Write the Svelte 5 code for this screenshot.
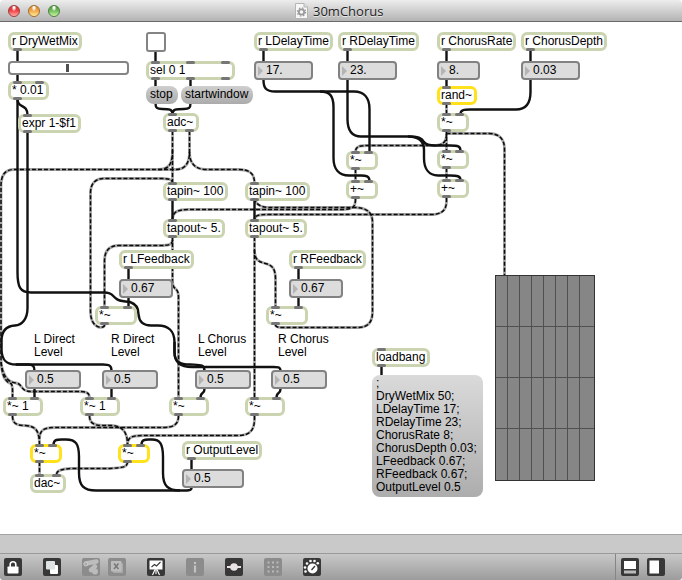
<script>
  // Objects of the patch: position, width, caption, inlet and outlet offsets
  const objects = [
    { x: 8, y: 32, w: 74, t: 'r DryWetMix', o: [5] },
    { x: 8, y: 81, w: 41, t: '* 0.01', i: [5, 27], o: [5] },
    { x: 18, y: 114, w: 63, t: 'expr 1-$f1', i: [5], o: [5] },
    { x: 146, y: 61, w: 89, t: 'sel 0 1', i: [5, 40, 75], o: [5, 40, 75] },
    { x: 163, y: 113, w: 36, t: 'adc~', i: [5], o: [5, 22] },
    { x: 254, y: 32, w: 79, t: 'r LDelayTime', o: [5] },
    { x: 338, y: 32, w: 81, t: 'r RDelayTime', o: [5] },
    { x: 437, y: 32, w: 79, t: 'r ChorusRate', o: [5] },
    { x: 521, y: 32, w: 86, t: 'r ChorusDepth', o: [5] },
    { x: 437, y: 86, w: 40, t: 'rand~', i: [5], o: [5], hot: true },
    { x: 437, y: 113, w: 32, t: '*~', i: [5, 18], o: [5] },
    { x: 346, y: 151, w: 32, t: '*~', i: [5, 18], o: [5] },
    { x: 346, y: 180, w: 32, t: '+~', i: [5, 18], o: [5] },
    { x: 437, y: 150, w: 32, t: '*~', i: [5, 18], o: [5] },
    { x: 437, y: 179, w: 32, t: '+~', i: [5, 18], o: [5] },
    { x: 163, y: 182, w: 65, t: 'tapin~ 100', i: [5], o: [5] },
    { x: 245, y: 182, w: 65, t: 'tapin~ 100', i: [5], o: [5] },
    { x: 163, y: 219, w: 62, t: 'tapout~ 5.', i: [5], o: [5] },
    { x: 245, y: 219, w: 62, t: 'tapout~ 5.', i: [5], o: [5] },
    { x: 119, y: 250, w: 75, t: 'r LFeedback', o: [5] },
    { x: 289, y: 250, w: 77, t: 'r RFeedback', o: [5] },
    { x: 95, y: 306, w: 42, t: '*~', i: [5, 28], o: [5] },
    { x: 266, y: 306, w: 42, t: '*~', i: [5, 28], o: [5] },
    { x: 3, y: 397, w: 40, t: '*~ 1', i: [5, 27], o: [5] },
    { x: 80, y: 397, w: 40, t: '*~ 1', i: [5, 27], o: [5] },
    { x: 169, y: 397, w: 40, t: '*~', i: [5, 27], o: [5] },
    { x: 245, y: 397, w: 40, t: '*~', i: [5, 27], o: [5] },
    { x: 30, y: 444, w: 32, t: '*~', i: [5, 18], o: [5], hot: true },
    { x: 118, y: 444, w: 32, t: '*~', i: [5, 18], o: [5], hot: true },
    { x: 30, y: 474, w: 36, t: 'dac~', i: [5, 22] },
    { x: 182, y: 441, w: 80, t: 'r OutputLevel', o: [5] },
    { x: 372, y: 348, w: 58, t: 'loadbang', i: [5], o: [5] }
  ];

  const numbers = [
    { x: 254, y: 61, w: 59, t: '17.' },
    { x: 338, y: 61, w: 59, t: '23.' },
    { x: 437, y: 61, w: 43, t: '8.' },
    { x: 521, y: 61, w: 59, t: '0.03' },
    { x: 119, y: 279, w: 54, t: '0.67' },
    { x: 289, y: 279, w: 54, t: '0.67' },
    { x: 25, y: 370, w: 56, t: '0.5' },
    { x: 102, y: 370, w: 56, t: '0.5' },
    { x: 195, y: 370, w: 56, t: '0.5' },
    { x: 271, y: 370, w: 56, t: '0.5' },
    { x: 182, y: 469, w: 62, t: '0.5' }
  ];

  const messages = [
    { x: 146, y: 86, w: 32, lines: ['stop'] },
    { x: 181, y: 86, w: 72, lines: ['startwindow'] },
    {
      x: 372, y: 375, w: 111, big: true,
      lines: [';', 'DryWetMix 50;', 'LDelayTime 17;', 'RDelayTime 23;', 'ChorusRate 8;',
        'ChorusDepth 0.03;', 'LFeedback 0.67;', 'RFeedback 0.67;', 'OutputLevel 0.5']
    }
  ];

  const comments = [
    { x: 34, y: 333, a: 'L Direct' },
    { x: 111, y: 333, a: 'R Direct' },
    { x: 198, y: 333, a: 'L Chorus' },
    { x: 278, y: 333, a: 'R Chorus' }
  ];

  // Control cords
  const solid = [
    'M17.5 50V62', 'M17.5 74V82', 'M17.5 99V272C17.5 287 20 292.5 31 292.5H104C113 292.5 112 296 116 298.5C120 302 125 301 130 302C136 304 138.500 309 138.500 314C139 322 144 325.500 151 325.500H158C168 325.500 174.500 331 174.500 342V352C174.500 362 180 364.500 190 364.500C200 365 204.500 364 204.500 371',
    'M174.500 342V352C174.500 364 182 367 192 367H268C277 367 280.500 366 280.500 371',
    'M17.500 99C17.500 109 27.500 103 27.500 115', 'M27.500 132V308C27.500 319 22 325 15 325.500C6 326 1.500 331 1.500 341V350C2 361 7 364.500 16 364.500H28C33 364.500 34.500 366 34.500 371', 'M16 364.500H103C110 364.500 111.500 366 111.500 371',
    'M155.500 52V62', 'M155.500 79V87', 'M190.500 79V87', 'M155.500 103C155.500 108 157 109 162 109C169 109 172.500 109 172.500 114', 'M190.500 103C190.500 108 189 109 184 109C176 109 172.500 109 172.500 114',
    'M263.500 50V62', 'M347.500 50V62', 'M446.500 50V62', 'M530.500 50V62', 'M446.500 80V87',
    'M263.500 80C263.500 88 266 91.500 275 91.500H354C364 91.500 369.500 98 369.500 109V152', 'M320 91.500C330 91.500 333.500 96 333.500 107V158C333.500 169 339 175.500 349 175.500H361C366 175.500 369.500 176 369.500 181',
    'M347.500 80V119C347.500 131 352 136.500 361 136.500H408C418 136.500 422 138 424 142C426 145 430 145.500 435 145.500H450C458 145.500 460.500 146 460.500 151', 'M408 136.500C420 136.500 424 142 424 150V158C424 169 429 175.500 438 175.500H450C457 175.500 460.500 176 460.500 180',
    'M530.500 80V92C530.500 104 525 109.500 516 109.500H473C465 109.500 460.500 109 460.500 114',
    'M172.500 200V220', 'M254.500 200V220', 'M128.500 268V280', 'M128.500 298V307', 'M298.500 268V280', 'M298.500 298V307',
    'M34.500 389V398', 'M111.500 389V398', 'M204.500 389C204.500 395 200.500 391 200.500 398', 'M280.500 389C280.500 395 276.500 391 276.500 398',
    'M191.500 459V470', 'M191.500 488C191.500 491 186 490.500 180 490.500H96C84 490.500 79 486 79 473V457C79 444 76 439.500 66 439.500H62C56 439.500 53.500 440 53.500 445', 'M180 490.500C168 490.500 163 486 163 473V457C163 444 160 439.500 152 439.500H149C144 439.500 141.500 440 141.500 445',
    'M381.500 366V376'
  ];

  // Signal cords
  const signal = [
    'M172.500 131V183', 'M172.500 150C172.500 163 170 169.500 158 169.500',
    'M189.500 131V152C189.500 163 185 169.500 176 169.500H14C5 169.500 1 175 1 186V357C1 376 6 382.500 11 383.500C13 386 12.500 390 12.500 398', 'M189.500 152C189.500 163 195 169.500 206 169.500H238C249 169.500 254.500 173 254.500 183',
    'M1 362C3 378 9 382.500 16 383C23 384 20 391.500 31 391.500H77C86 391.500 89.500 392 89.500 398',
    'M104.500 325C104.500 329 90.500 330 90.500 311V193C90.500 183 96 178.500 104 178.500H159C168 178.500 172.500 179 172.500 183',
    'M172.500 237V282C172.500 291 178.500 286 178.500 297V398', 'M172.500 240C172.500 245 168 245.500 160 245.500H119C109 245.500 104.500 251 104.500 261V307',
    'M355.500 199C355.500 207 353 209.500 341 209.500H189C177 209.500 172.500 212 172.500 220',
    'M446.500 198V201C446.500 211 441 214.500 431 214.500H270C259 214.500 254.500 215 254.500 220',
    'M275.500 325C275.500 327 279 327.500 283 327.500H358C368 327.500 372.500 322 372.500 312V222C372.500 211 365 207.500 354 207.500H269C260 207.500 254.500 203 254.500 198',
    'M254.500 237V398', 'M254.500 250C254.500 272 275.500 254 275.500 279V307',
    'M446.500 104V114', 'M446.500 131V151', 'M446.500 133.500H489C499 133.500 504.500 139 504.500 149V276', 'M446.500 134C446.500 143 442 145.500 433 145.500H369C360 145.500 355.500 146 355.500 152',
    'M355.500 169V181', 'M446.500 168V180',
    'M12.500 416C12.500 423 16 425.500 25 425.500C36 426 39.500 431 39.500 445', 'M89.500 416C89.500 423 94 425.500 102 425.500H111C122 426 127.500 431 127.500 445',
    'M178.500 416C178.500 425 173 427.500 163 427.500H55C44 427.500 39.500 430 39.500 439', 'M254.500 416V419C254.500 431 249 435.500 238 435.500H143C132 435.500 127.500 437 127.500 445',
    'M39.500 462V475', 'M127.500 462C127.500 468 121 467.500 110 468.500H72C62 469 56.500 470 56.500 475'
  ];
</script>

<div class="window">
  <header>
    <div class="lights"><i class="red"></i><i class="amber"></i><i class="green"></i></div>
    <div class="title">
      <svg width="13" height="16" viewBox="0 0 13 16">
        <path d="M.5.5H9L12.500 4V15.500H.5Z" fill="#f7f7f7" stroke="#b5b5b5" />
        <path d="M9 .5V4H12.500" fill="#ddd" stroke="#b5b5b5" />
        <circle cx="6.500" cy="9" r="2.700" fill="none" stroke="#9a9a9a" stroke-width="1.800" />
        <circle cx="6.500" cy="9" r="4.100" fill="none" stroke="#9a9a9a" stroke-width="1.200" stroke-dasharray="1.600 1.620" />
      </svg>
      <span>30mChorus</span>
    </div>
  </header>

  <main>
    <svg class="cords" width="682" height="512" viewBox="0 22 682 512">
      {#each signal as d}
        <path {d} class="sheath" />
      {/each}
      {#each signal as d}
        <path {d} class="dash" />
      {/each}
      {#each solid as d}
        <path {d} class="solid" />
      {/each}
    </svg>

    {#each comments as c}
      <div class="comment" style="left:{c.x}px;top:{c.y - 22}px">{c.a}<br />Level</div>
    {/each}

    {#each objects as b}
      <div class="object" class:hot={b.hot} style="left:{b.x}px;top:{b.y - 22}px;width:{b.w}px">
        {b.t}
        {#each b.i ?? [] as p}<i class="port in" style="left:{p}px"></i>{/each}
        {#each b.o ?? [] as p}<i class="port out" style="left:{p}px"></i>{/each}
      </div>
    {/each}

    {#each numbers as n}
      <div class="number" style="left:{n.x}px;top:{n.y - 22}px;width:{n.w}px">
        <svg width="5" height="10"><path d="M0 0L5 5L0 10Z" fill="#b4b4b4" /></svg>{n.t}
      </div>
    {/each}

    {#each messages as m}
      <div class="message" class:big={m.big} style="left:{m.x}px;top:{m.y - 22}px;width:{m.w}px">
        {#each m.lines as l}<div>{l}</div>{/each}
      </div>
    {/each}

    <div class="slider"><i></i></div>
    <div class="toggle"></div>

    <svg class="matrix" width="100" height="206" viewBox="0 0 100 206">
      <rect x=".5" y=".5" width="99" height="205" fill="#868686" stroke="#333" />
      {#each [12, 24, 36, 48, 60, 72, 84] as x}<path d="M{x + 0.5} 1V205" stroke="#505050" />{/each}
      {#each [51, 102, 153] as y}<path d="M1 {y + 0.5}H99" stroke="#505050" />{/each}
    </svg>
  </main>

  <div class="strip"></div>

  <footer>
    <svg class="ic" viewBox="0 0 18 18"><rect width="18" height="18" rx="2" fill="#383838" /><path d="M6.200 9V6.500a2.800 2.800 0 0 1 5.600 0V9" fill="none" stroke="#fff" stroke-width="1.600" /><rect x="3.500" y="8.500" width="11" height="7" rx=".8" fill="#fff" /></svg>
    <svg class="ic" viewBox="0 0 18 18"><rect width="18" height="18" rx="2" fill="#383838" /><rect x="7" y="7" width="8" height="9" rx="1" fill="#fff" /><rect x="3" y="3" width="9" height="8.500" rx="1" fill="#dde3e3" /></svg>
    <svg class="ic" viewBox="0 0 18 18"><rect width="18" height="18" rx="2" fill="#8c8c8c" /><path d="M4 5.500L14.500 3.500M9 12L13 8.500" stroke="#bdbdbd" stroke-width="4.500" stroke-linecap="round" /><circle cx="3.800" cy="6" r="2" fill="#aaa" stroke="#ccc" /><circle cx="13" cy="13.500" r="3" fill="#bbb" /></svg>
    <svg class="ic near" viewBox="0 0 18 18"><rect width="18" height="18" rx="2" fill="#8c8c8c" /><rect x="5" y="5" width="10" height="10" rx="1" fill="#aaa" /><rect x="3" y="3" width="10.500" height="10.500" rx="1" fill="#bcbcbc" /><path d="M6 5.500L10.500 11M10.500 5.500L6 11" stroke="#777" stroke-width="1.500" /></svg>
    <svg class="ic" viewBox="0 0 18 18"><rect width="18" height="18" rx="2" fill="#383838" /><path d="M2.500 2.500H15.500V11.500H2.500Z" fill="#fff" /><path d="M4.500 9L7.500 6.500L9.500 8L13.500 4" fill="none" stroke="#383838" stroke-width="1.100" /><path d="M9 11V16M8 11.500L5.500 17M10 11.500L12.500 17" stroke="#fff" stroke-width="1.100" /></svg>
    <svg class="ic" viewBox="0 0 18 18"><rect width="18" height="18" rx="2" fill="#8c8c8c" /><circle cx="9" cy="5" r="1.200" fill="#c2c2c2" /><path d="M9 7.500V14.500" stroke="#c2c2c2" stroke-width="2.200" /></svg>
    <svg class="ic" viewBox="0 0 18 18"><rect width="18" height="18" rx="2" fill="#383838" /><path d="M2 9H16" stroke="#e8e2e4" stroke-width="2" /><circle cx="9" cy="9" r="3.800" fill="#e8e2e4" /></svg>
    <svg class="ic" viewBox="0 0 18 18"><rect width="18" height="18" rx="2" fill="#8c8c8c" />{#each [4.5, 9, 13.5] as x}{#each [4.5, 9, 13.5] as y}<rect x={x - 1} y={y - 1} width="2" height="2" fill="#b8b8b8" />{/each}{/each}</svg>
    <svg class="ic" viewBox="0 0 18 18"><rect width="18" height="18" rx="2" fill="#383838" /><circle cx="9.500" cy="10.500" r="5" fill="#fff" /><path d="M8.500 12L12 8" stroke="#383838" stroke-width="1.300" />{#each [[2.5, 13.5], [2, 9.5], [4, 5.5], [7.5, 3], [11.5, 3], [14.8, 5.3]] as [x, y]}<circle cx={x} cy={y} r="1.300" fill="#fff" />{/each}</svg>
    <div class="right">
      <svg class="ic" viewBox="0 0 18 18"><rect width="18" height="18" rx="2" fill="#383838" /><rect x="3" y="3" width="12" height="8" fill="#fff" /><rect x="3" y="12.500" width="12" height="3" fill="#bbb" /></svg>
      <svg class="ic" viewBox="0 0 18 18"><rect width="18" height="18" rx="2" fill="#383838" /><rect x="2.500" y="2.500" width="9.500" height="13" fill="#fff" /></svg>
    </div>
  </footer>
</div>

<style>
  :global(body) { margin: 0; background: #fff; }
  .window {
    width: 682px; height: 580px; display: flex; flex-direction: column; overflow: hidden;
    font: 12px/13px "Liberation Sans", Arial, sans-serif; color: #000;
    border-radius: 4px 4px 3px 3px;
  }
  header {
    position: relative; height: 22px; box-sizing: border-box; flex: none; display: flex; align-items: center;
    background: linear-gradient(#ededed, #b3b3b3); border-bottom: 1px solid #6a6a6a;
  }
  .lights { display: flex; gap: 8px; padding-left: 8px; }
  .lights i { width: 12px; height: 12px; box-sizing: border-box; border-radius: 50%; border: 1px solid; }
  .lights .red { background: radial-gradient(ellipse at 50% 15%, #fff 0 8%, transparent 35%), linear-gradient(#d33c3c, #ef3d40 45%, #ffb0a8); border-color: #9d3d3b; }
  .lights .amber { background: radial-gradient(ellipse at 50% 15%, #fff 0 8%, transparent 35%), linear-gradient(#d9882c, #f0a545 45%, #ffee9c); border-color: #a26b2d; }
  .lights .green { background: radial-gradient(ellipse at 50% 15%, #fff 0 8%, transparent 35%), linear-gradient(#52963f, #6dbb59 45%, #cbf5a5); border-color: #4b7f3d; }
  .title {
    flex: 1; display: flex; align-items: center; gap: 5px; padding-left: 235px;
    font: 13px/20px "Open Sans", "Noto Sans", sans-serif; color: #222; text-shadow: 0 1px 0 #e9e9e9;
  }
  main { position: relative; height: 512px; flex: none; background: #fff; overflow: hidden; }
  .cords { display: block; }
  .cords path { fill: none; }
  .cords .solid { stroke: #111; stroke-width: 2.4; }
  .cords .sheath { stroke: #a6a6a6; stroke-width: 2.8; }
  .cords .dash { stroke: #0a0a0a; stroke-width: 1.5; stroke-dasharray: 4 2; }

  .object, .number, .message, .comment, .slider, .toggle, .matrix { position: absolute; box-sizing: border-box; white-space: nowrap; }
  .object {
    height: 19px; border: 3px solid #cbd4b1; border-radius: 6px; background: #fff;
    line-height: 13px; padding-left: 1px;
  }
  .object.hot { border-color: #ffe11c; }
  .port { position: absolute; width: 9px; height: 3px; margin-left: -3px; border-radius: 1.5px; background: #767676; }
  .in { top: -3px; }
  .out { bottom: -3px; }
  .number {
    height: 19px; border: 2px solid #828282; border-radius: 4px; background: #dcdcdc;
    display: flex; align-items: center; gap: 3px; padding-left: 2px; line-height: 15px;
  }
  .message { height: 18px; border-radius: 8px; padding: 2px 4px; background: linear-gradient(#cfcfcf, #ababab); }
  .message.big { height: 122px; background: linear-gradient(#dadada, #adadad); }
  .slider { left: 8px; top: 39px; width: 121px; height: 14px; border: 2px solid #848484; border-radius: 4px; display: flex; align-items: center; background: #fff; }
  .slider i { width: 3px; height: 8px; margin-left: 56px; background: #505050; }
  .toggle { left: 146px; top: 10px; width: 20px; height: 20px; border: 2px solid #848484; border-radius: 3px; background: #fff; }
  .matrix { left: 495px; top: 253px; }
  .strip { height: 19px; flex: none; box-sizing: border-box; border-top: 1px solid #a3a3a3; background: #c9c9c9; }
  footer {
    flex: 1; box-sizing: border-box; border-top: 1px solid #999; background: linear-gradient(#c8c8c8, #9c9c9c);
    display: flex; align-items: center; padding: 0 17px 0 4px; gap: 21px;
  }
  .ic { width: 18px; height: 18px; flex: none; display: block; }
  .near { margin-left: -13px; }
  .right { margin-left: auto; display: flex; gap: 8px; align-items: center; height: 100%; border-left: 1px solid #858585; padding-left: 5px; }
</style>
